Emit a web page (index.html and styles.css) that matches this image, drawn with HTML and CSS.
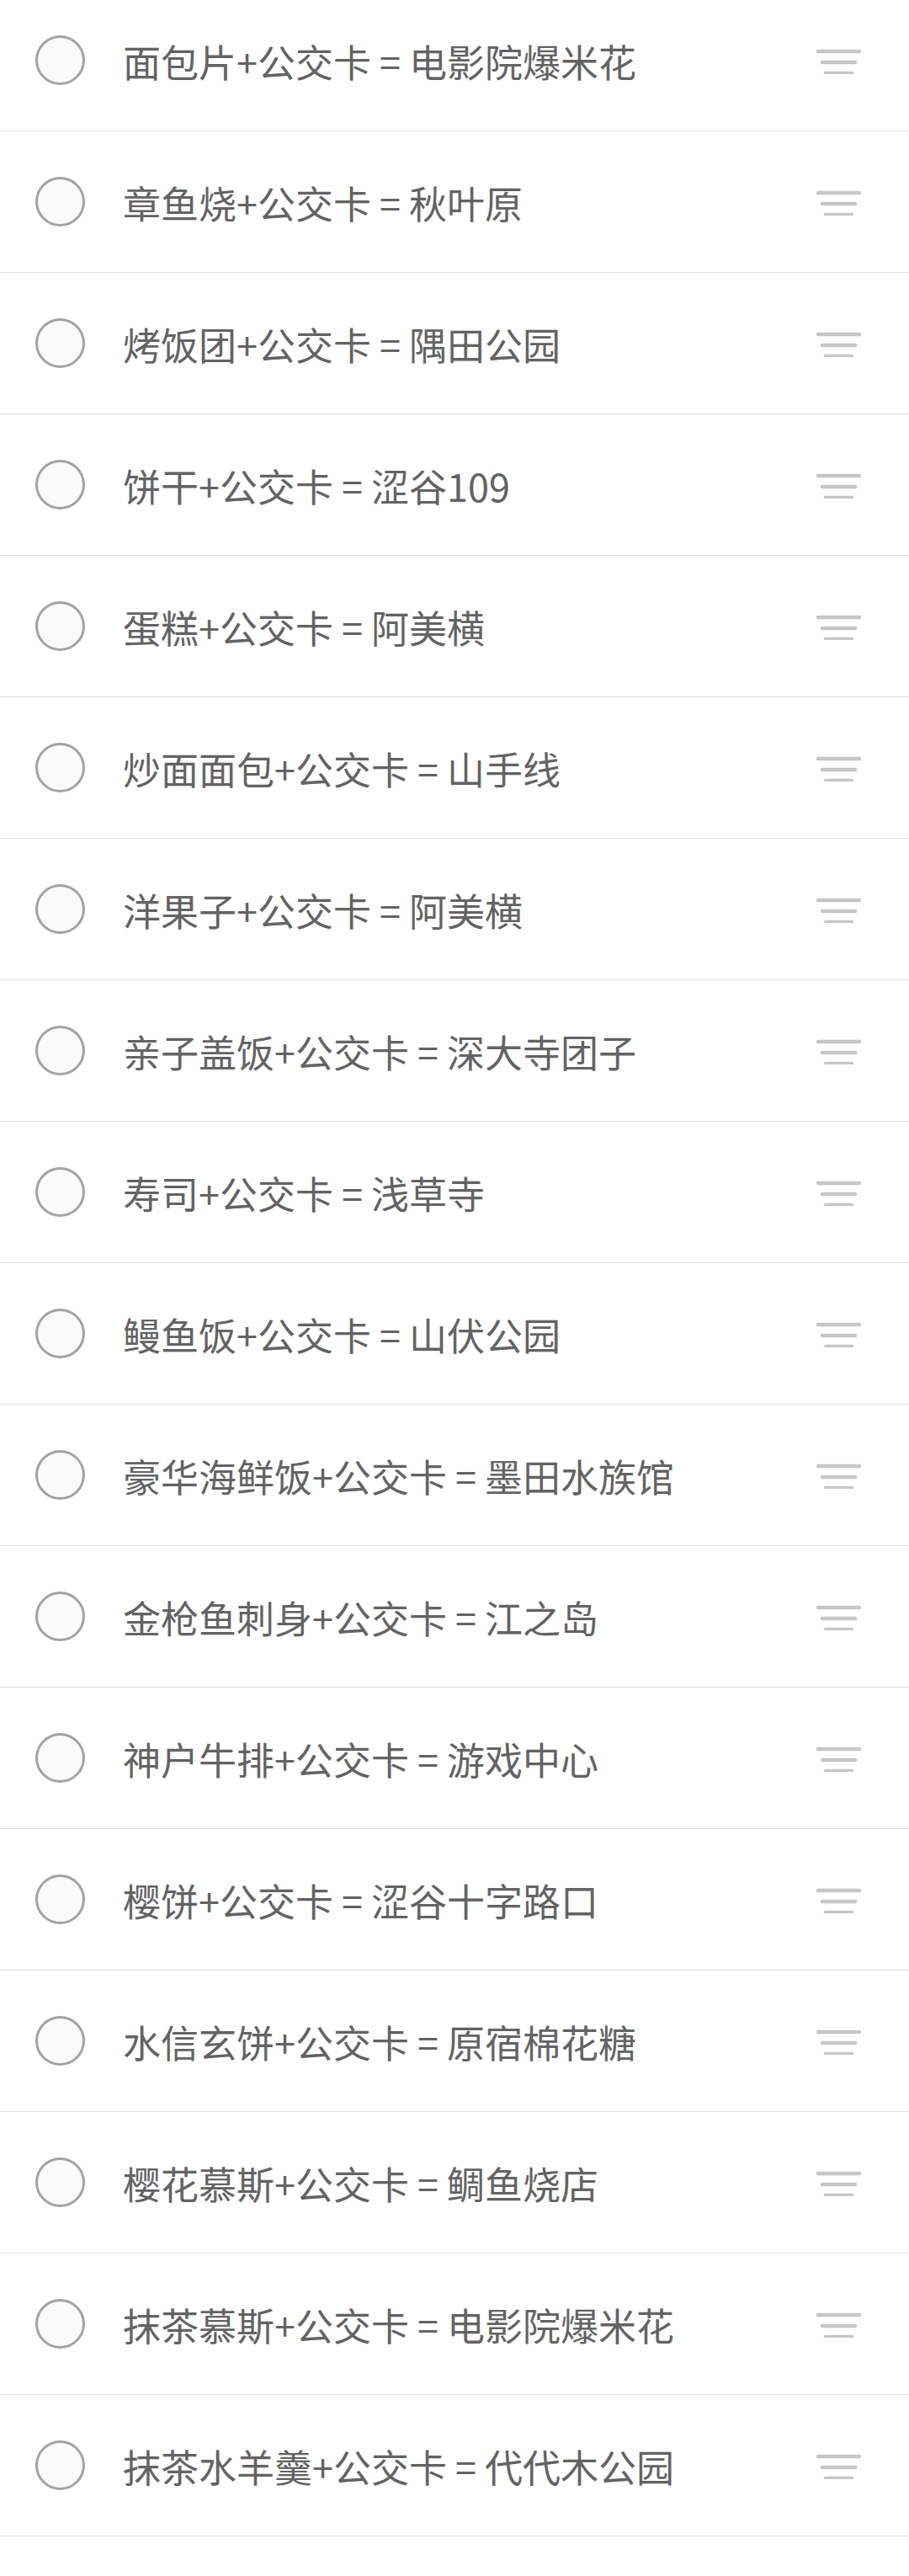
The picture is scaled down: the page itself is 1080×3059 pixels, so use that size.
FILE: index.html
```html
<!DOCTYPE html>
<html lang="zh-CN">
<head>
<meta charset="UTF-8"><meta name="viewport" content="width=device-width, initial-scale=1">
<title>搭配清单</title>
<link rel="stylesheet" href="styles.css">
</head>
<body>
  <ul class="list">
    <li class="item"><span class="check"></span><span class="label">面包片+公交卡 = 电影院爆米花</span><svg class="drag" viewBox="0 0 56 32"><path d="M4 5H53M9 18H48M13 31H44"/></svg></li>
    <li class="item"><span class="check"></span><span class="label">章鱼烧+公交卡 = 秋叶原</span><svg class="drag" viewBox="0 0 56 32"><path d="M4 5H53M9 18H48M13 31H44"/></svg></li>
    <li class="item"><span class="check"></span><span class="label">烤饭团+公交卡 = 隅田公园</span><svg class="drag" viewBox="0 0 56 32"><path d="M4 5H53M9 18H48M13 31H44"/></svg></li>
    <li class="item"><span class="check"></span><span class="label">饼干+公交卡 = 涩谷109</span><svg class="drag" viewBox="0 0 56 32"><path d="M4 5H53M9 18H48M13 31H44"/></svg></li>
    <li class="item"><span class="check"></span><span class="label">蛋糕+公交卡 = 阿美横</span><svg class="drag" viewBox="0 0 56 32"><path d="M4 5H53M9 18H48M13 31H44"/></svg></li>
    <li class="item"><span class="check"></span><span class="label">炒面面包+公交卡 = 山手线</span><svg class="drag" viewBox="0 0 56 32"><path d="M4 5H53M9 18H48M13 31H44"/></svg></li>
    <li class="item"><span class="check"></span><span class="label">洋果子+公交卡 = 阿美横</span><svg class="drag" viewBox="0 0 56 32"><path d="M4 5H53M9 18H48M13 31H44"/></svg></li>
    <li class="item"><span class="check"></span><span class="label">亲子盖饭+公交卡 = 深大寺团子</span><svg class="drag" viewBox="0 0 56 32"><path d="M4 5H53M9 18H48M13 31H44"/></svg></li>
    <li class="item"><span class="check"></span><span class="label">寿司+公交卡 = 浅草寺</span><svg class="drag" viewBox="0 0 56 32"><path d="M4 5H53M9 18H48M13 31H44"/></svg></li>
    <li class="item"><span class="check"></span><span class="label">鳗鱼饭+公交卡 = 山伏公园</span><svg class="drag" viewBox="0 0 56 32"><path d="M4 5H53M9 18H48M13 31H44"/></svg></li>
    <li class="item"><span class="check"></span><span class="label">豪华海鲜饭+公交卡 = 墨田水族馆</span><svg class="drag" viewBox="0 0 56 32"><path d="M4 5H53M9 18H48M13 31H44"/></svg></li>
    <li class="item"><span class="check"></span><span class="label">金枪鱼刺身+公交卡 = 江之岛</span><svg class="drag" viewBox="0 0 56 32"><path d="M4 5H53M9 18H48M13 31H44"/></svg></li>
    <li class="item"><span class="check"></span><span class="label">神户牛排+公交卡 = 游戏中心</span><svg class="drag" viewBox="0 0 56 32"><path d="M4 5H53M9 18H48M13 31H44"/></svg></li>
    <li class="item"><span class="check"></span><span class="label">樱饼+公交卡 = 涩谷十字路口</span><svg class="drag" viewBox="0 0 56 32"><path d="M4 5H53M9 18H48M13 31H44"/></svg></li>
    <li class="item"><span class="check"></span><span class="label">水信玄饼+公交卡 = 原宿棉花糖</span><svg class="drag" viewBox="0 0 56 32"><path d="M4 5H53M9 18H48M13 31H44"/></svg></li>
    <li class="item"><span class="check"></span><span class="label">樱花慕斯+公交卡 = 鲷鱼烧店</span><svg class="drag" viewBox="0 0 56 32"><path d="M4 5H53M9 18H48M13 31H44"/></svg></li>
    <li class="item"><span class="check"></span><span class="label">抹茶慕斯+公交卡 = 电影院爆米花</span><svg class="drag" viewBox="0 0 56 32"><path d="M4 5H53M9 18H48M13 31H44"/></svg></li>
    <li class="item"><span class="check"></span><span class="label">抹茶水羊羹+公交卡 = 代代木公园</span><svg class="drag" viewBox="0 0 56 32"><path d="M4 5H53M9 18H48M13 31H44"/></svg></li>
    <li class="item"></li>
  </ul>
</body>
</html>
```

FILE: styles.css
```css
body{margin:0;background:#fff;color:#636363;font-family:"Noto Sans CJK SC","Noto Sans",sans-serif;overflow:hidden}
.list{list-style:none;margin:-12px 0 0;padding:0}
.item{display:flex;align-items:center;height:167px;border-bottom:1px solid #e2e2e2;padding:0 56px 0 42px}
.check{flex:none;width:53px;height:53px;border:3px solid #a3a3a3;border-radius:50%;background:#fafafa}
.label{flex:1;margin-left:45px;font-size:45px;line-height:60px;white-space:nowrap;padding-top:2px}
.drag{flex:none;width:56px;height:32px;fill:none;stroke:#c6c6c6;stroke-width:4.5;stroke-linecap:round}
```
